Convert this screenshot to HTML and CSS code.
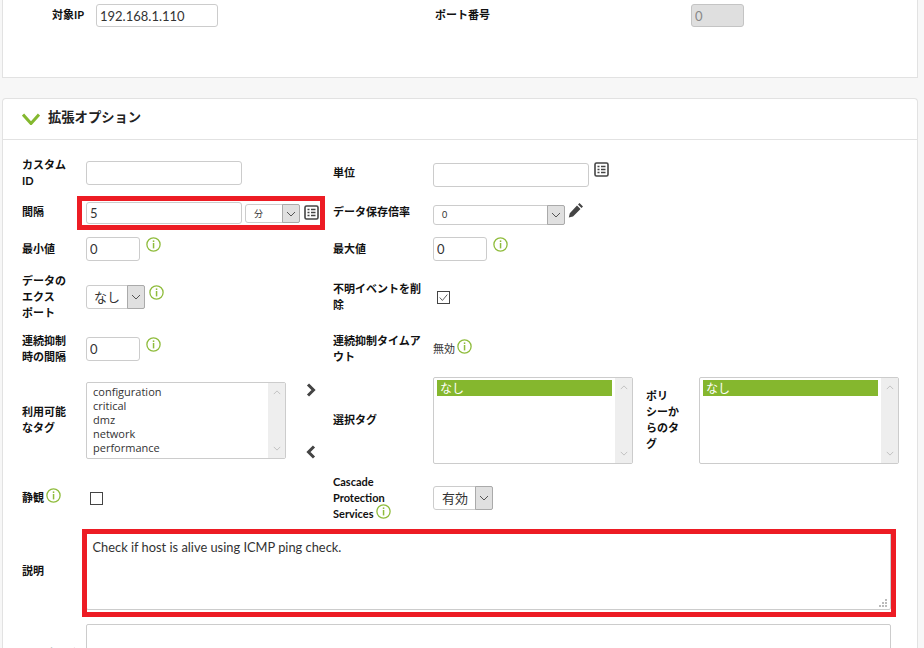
FILE: index.html
```html
<!DOCTYPE html>
<html lang="ja">
<head>
<meta charset="utf-8">
<title>モジュール設定</title>
<link rel="stylesheet" href="styles.css">
</head>
<body>
<svg class="defs" width="0" height="0" aria-hidden="true">
  <symbol id="info" viewBox="0 0 15 15">
    <circle cx="7.5" cy="7.5" r="6.6" fill="none" stroke="#8fbc3c" stroke-width="1.3"/>
    <rect x="6.8" y="3.4" width="1.5" height="1.6" fill="#8fbc3c"/>
    <rect x="6.8" y="6" width="1.5" height="5.4" fill="#8fbc3c"/>
  </symbol>
  <symbol id="table" viewBox="0 0 15 15">
    <rect x="1" y="1" width="13" height="13" rx="1.5" fill="#fff" stroke="#444" stroke-width="1.6"/>
    <path d="M3.5 4.5h2M7 4.5h4.5M3.5 7.5h2M7 7.5h4.5M3.5 10.5h2M7 10.5h4.5" stroke="#444" stroke-width="1.5" fill="none"/>
  </symbol>
  <symbol id="down" viewBox="0 0 10 6">
    <path d="M1 1l4 4 4-4" fill="none" stroke="#555" stroke-width="1"/>
  </symbol>
</svg>

<section class="panel panel-top">
  <div class="top-grid">
    <label class="lbl">対象IP</label>
    <div><input class="field w-ip" value="192.168.1.110"></div>
    <label class="lbl">ポート番号</label>
    <div><input class="field field-off w-port" value="0" disabled></div>
  </div>
</section>

<section class="panel panel-adv">
  <header class="panel-head">
    <svg class="head-chev" viewBox="0 0 18 12"><path d="M1 1.500L9 10.500l8-9" fill="none" stroke="#84b82f" stroke-width="3"/></svg>
    <h2 class="panel-title">拡張オプション</h2>
  </header>

  <div class="form-grid">
    <label class="lbl lbl-l">カスタムID</label>
    <div class="ctl"><input class="field w-long"></div>
    <label class="lbl lbl-r">単位</label>
    <div class="ctl nudge-4"><input class="field w-long"><svg class="ic ic-up"><use href="#table"/></svg></div>

    <label class="lbl lbl-l">間隔</label>
    <div class="ctl mark-host nudge-2">
      <input class="field field-low w-long" value="5">
      <div class="sel sel-tiny w-unit"><span class="sel-val">分</span><span class="sel-arrow"><svg class="ar"><use href="#down"/></svg></span></div>
      <svg class="ic ic-tbl"><use href="#table"/></svg>
      <span class="mark mark-a"></span>
    </div>
    <label class="lbl lbl-r">データ保存倍率</label>
    <div class="ctl nudge-6">
      <div class="sel sel-tiny w-rate"><span class="sel-val">0</span><span class="sel-arrow"><svg class="ar"><use href="#down"/></svg></span></div>
      <svg class="pencil" viewBox="0 0 16 16"><path d="M11.500 1l3.500 3.500-1.500 1.500L10 2.500zM9 3.500L12.500 7l-7.500 7.500L.8 15.500l1-4.300z" fill="#444"/></svg>
    </div>

    <label class="lbl lbl-l">最小値</label>
    <div class="ctl"><input class="field w-num" value="0"><svg class="ic"><use href="#info"/></svg></div>
    <label class="lbl lbl-r">最大値</label>
    <div class="ctl"><input class="field w-num" value="0"><svg class="ic"><use href="#info"/></svg></div>

    <label class="lbl lbl-l">データのエクスポート</label>
    <div class="ctl gap-4">
      <div class="sel w-none"><span class="sel-val">なし</span><span class="sel-arrow"><svg class="ar"><use href="#down"/></svg></span></div>
      <svg class="ic"><use href="#info"/></svg>
    </div>
    <label class="lbl lbl-r">不明イベントを削除</label>
    <div class="ctl"><span class="check"><svg viewBox="0 0 13 13"><path d="M2 6.500l3.200 3.500 5.800-7" fill="none" stroke="#444" stroke-width="1"/></svg></span></div>

    <label class="lbl lbl-l">連続抑制時の間隔</label>
    <div class="ctl"><input class="field w-num" value="0"><svg class="ic"><use href="#info"/></svg></div>
    <label class="lbl lbl-r">連続抑制タイムアウト</label>
    <div class="ctl static"><span class="plain">無効</span><svg class="ic"><use href="#info"/></svg></div>

    <label class="lbl lbl-l">利用可能なタグ</label>
    <div class="tags-left">
      <div class="list list-avail">
        <ul class="list-items">
          <li>configuration</li><li>critical</li><li>dmz</li><li>network</li><li>performance</li>
        </ul>
        <div class="list-bar"><svg class="bar-ar up"><use href="#down"/></svg><svg class="bar-ar"><use href="#down"/></svg></div>
      </div>
      <div class="moves">
        <svg class="move" viewBox="0 0 10 14"><path d="M2 1.500L7.500 7 2 12.500" fill="none" stroke="#444" stroke-width="3"/></svg>
        <svg class="move" viewBox="0 0 10 14"><path d="M8 1.500L2.500 7 8 12.500" fill="none" stroke="#444" stroke-width="3"/></svg>
      </div>
    </div>
    <label class="lbl lbl-r">選択タグ</label>
    <div class="tags-right">
      <div class="list list-sel">
        <ul class="list-items sel-items"><li class="on">なし</li></ul>
        <div class="list-bar"><svg class="bar-ar up"><use href="#down"/></svg><svg class="bar-ar"><use href="#down"/></svg></div>
      </div>
      <label class="lbl lbl-policy">ポリシーからのタグ</label>
      <div class="list list-sel">
        <ul class="list-items sel-items"><li class="on">なし</li></ul>
        <div class="list-bar"><svg class="bar-ar up"><use href="#down"/></svg><svg class="bar-ar"><use href="#down"/></svg></div>
      </div>
    </div>

    <label class="lbl lbl-l">静観<svg class="ic ic-inl"><use href="#info"/></svg></label>
    <div class="ctl"><span class="check"></span></div>
    <label class="lbl lbl-casc">Cascade Protection Services<svg class="ic ic-inl"><use href="#info"/></svg></label>
    <div class="ctl">
      <div class="sel w-on"><span class="sel-val">有効</span><span class="sel-arrow"><svg class="ar"><use href="#down"/></svg></span></div>
    </div>

    <label class="lbl lbl-l">説明</label>
    <div class="wide mark-host">
      <textarea class="area area-desc">Check if host is alive using ICMP ping check.</textarea>
      <svg class="grip" viewBox="0 0 9 9"><path d="M6 0h2v2H6zM3 3h2v2H3zM6 3h2v2H6zM0 6h2v2H0zM3 6h2v2H3zM6 6h2v2H6z" fill="#bbb"/></svg>
      <span class="mark mark-b"></span>
    </div>

    <label class="lbl lbl-l lbl-last">障害時の手順</label>
    <div class="wide wide-last"><textarea class="area area-next"></textarea></div>
  </div>
</section>
</body>
</html>
```

FILE: styles.css
```css
html, body {
  margin: 0;
  height: 648px;
  overflow: hidden;
}
body {
  background: #f7f7f7;
  color: #333;
  font: 13px/16px Lato, "Noto Sans CJK JP", sans-serif;
  line-break: strict;
}
.defs { position: absolute; }

.panel {
  margin-left: 2px;
  width: 916px;
  box-sizing: border-box;
  background: #fff;
  border: 1px solid #e2e2e2;
}
.panel-top {
  height: 78px;
  border-top: 0;
  padding: 4px 0 0 49px;
}
.panel-adv {
  margin-top: 20px;
  height: 600px;
  border-radius: 4px 4px 0 0;
  border-bottom: 0;
}
.top-grid {
  display: grid;
  grid-template-columns: 44px 339px 256px auto;
  align-items: start;
}
.top-grid .lbl { line-height: 22px; }

.panel-head {
  display: flex;
  align-items: center;
  height: 40px;
  padding-left: 19px;
  border-bottom: 1px solid #e2e2e2;
  box-sizing: content-box;
}
.head-chev { width: 18px; height: 12px; margin-right: 7px; }
.panel-title {
  margin: 0 0 4px 1px;
  font-size: 13.3px;
  font-weight: 700;
  color: #222;
}

.form-grid {
  display: grid;
  grid-template-columns: 64px 247px 100px 466px;
  grid-template-rows: 40px 38px 36px 60px 44px 98px 58px 88px 80px;
  padding: 13px 0 0 19px;
  align-items: center;
}
.lbl {
  display: block;
  font-size: 11px;
  font-weight: 700;
  line-height: 16px;
  color: #111;
}
.lbl-l { width: 50px; }
.lbl-r { width: 96px; }
.lbl-casc { width: 70px; }
.lbl-last { align-self: start; width: 90px; margin-top: 31px; white-space: nowrap; }

.field {
  box-sizing: border-box;
  height: 24px;
  padding: 0 3px;
  background: #fff;
  border: 1px solid #ccc;
  border-radius: 3px;
  color: #333;
  font: 13px Lato, "Noto Sans CJK JP", sans-serif;
  outline: 0;
}
.field-low { height: 22px; }
.field-off { background: #dfdfdf; border-color: #c4c4c4; color: #888; }
.w-ip { width: 122px; height: 23px; }
.w-port { width: 53px; height: 23px; padding-left: 3px; }
.w-long { width: 156px; }
.w-num { width: 54px; }

.ctl {
  display: flex;
  align-items: flex-start;
  gap: 6px;
}
.gap-4 { gap: 4px; }
.nudge-2 { margin-top: 2px; }
.nudge-4 { margin-top: 4px; gap: 5px; }
.nudge-6 { margin-top: 6px; gap: 3px; }
.ic { width: 15px; height: 15px; flex: none; }
.ic-up { margin-top: -1px; }
.ic-tbl { margin: 3px 0 0 -2px; }
.ic-inl { margin: -4px 0 -4px 2px; vertical-align: 3px; }
.static { align-items: center; gap: 2px; }
.static .ic { margin-top: -6px; }
.plain { font-size: 11px; }

.sel {
  display: flex;
  box-sizing: border-box;
  height: 24px;
  background: #fff;
  border: 1px solid #ccc;
  border-radius: 3px;
  font-size: 13px;
}
.sel-val { flex: 1; padding-left: 7px; line-height: 22px; }
.sel-arrow {
  display: flex;
  align-items: center;
  justify-content: center;
  width: 16px;
  background: #e0e0e0;
  border: 1px solid #aaa;
  border-radius: 0 2px 2px 0;
  margin: -1px;
}
.ar { width: 10px; height: 6px; }
.sel-tiny { height: 19px; font-size: 9px; margin-top: 2px; }
.nudge-6 .sel-tiny { margin-top: 0; height: 20px; }
.sel-tiny .sel-val { line-height: 18px; padding-left: 8px; }
.w-unit { width: 55px; margin-left: -3px; }
.w-rate { width: 132px; }
.w-none { width: 59px; }
.w-on { width: 60px; }
.w-on .sel-val { padding-left: 8px; }

.check {
  display: block;
  box-sizing: border-box;
  width: 13px;
  height: 13px;
  margin-left: 4px;
  border: 1px solid #444;
  background: #fff;
}
.check svg { display: block; width: 11px; height: 11px; }

.tags-left, .tags-right { display: flex; }
.tags-left { align-items: stretch; }
.tags-right { align-items: center; }
.list {
  display: flex;
  box-sizing: border-box;
  width: 200px;
  background: #fff;
  border: 1px solid #ccc;
  border-radius: 2px;
}
.list-avail { height: 77px; }
.list-sel { height: 87px; }
.list-items {
  flex: 1;
  margin: 0;
  padding: 2px 2px 0 6px;
  list-style: none;
  font: 11px/14px "Open Sans", sans-serif;
  color: #333;
}
.sel-items { padding: 2px 3px 0 3px; font: 12px/16px "Noto Sans CJK JP", sans-serif; }
.on { background: #85b72e; color: #fff; padding-left: 3px; }
.list-bar {
  display: flex;
  flex-direction: column;
  justify-content: space-between;
  align-items: center;
  width: 17px;
  padding: 7px 0;
  box-sizing: border-box;
  background: #eee;
}
.bar-ar { width: 8px; height: 5px; opacity: .35; }
.bar-ar.up { transform: scaleY(-1); }
.moves {
  display: flex;
  flex-direction: column;
  justify-content: space-between;
  margin-left: 20px;
  padding: 1px 0 0;
  height: 76px;
}
.move { display: block; width: 10px; height: 14px; }
.lbl-policy { width: 40px; margin: 0 13px; }

.wide { grid-column: 2 / 5; }
.wide-last { align-self: start; }
.area {
  display: block;
  box-sizing: border-box;
  width: 805px;
  resize: none;
  padding: 6px 5.500px;
  background: #fff;
  border: 1px solid #ccc;
  border-radius: 2px;
  color: #333;
  font: 12.85px/16px Lato, "Noto Sans CJK JP", sans-serif;
  outline: 0;
}
.area-desc { height: 78px; }
.area-next { height: 66px; margin-top: 9px; }

.mark-host { position: relative; }
.mark {
  position: absolute;
  box-sizing: border-box;
  border: 5px solid #ed1c24;
  pointer-events: none;
}
.mark-a { left: -9px; top: -6px; width: 248px; height: 34px; }
.mark-b { left: -4px; top: -3px; width: 814px; height: 88px; }
.grip { position: absolute; left: 793px; top: 67px; width: 9px; height: 9px; }
.pencil { width: 16px; height: 16px; margin-top: -3px; flex: none; }
```
